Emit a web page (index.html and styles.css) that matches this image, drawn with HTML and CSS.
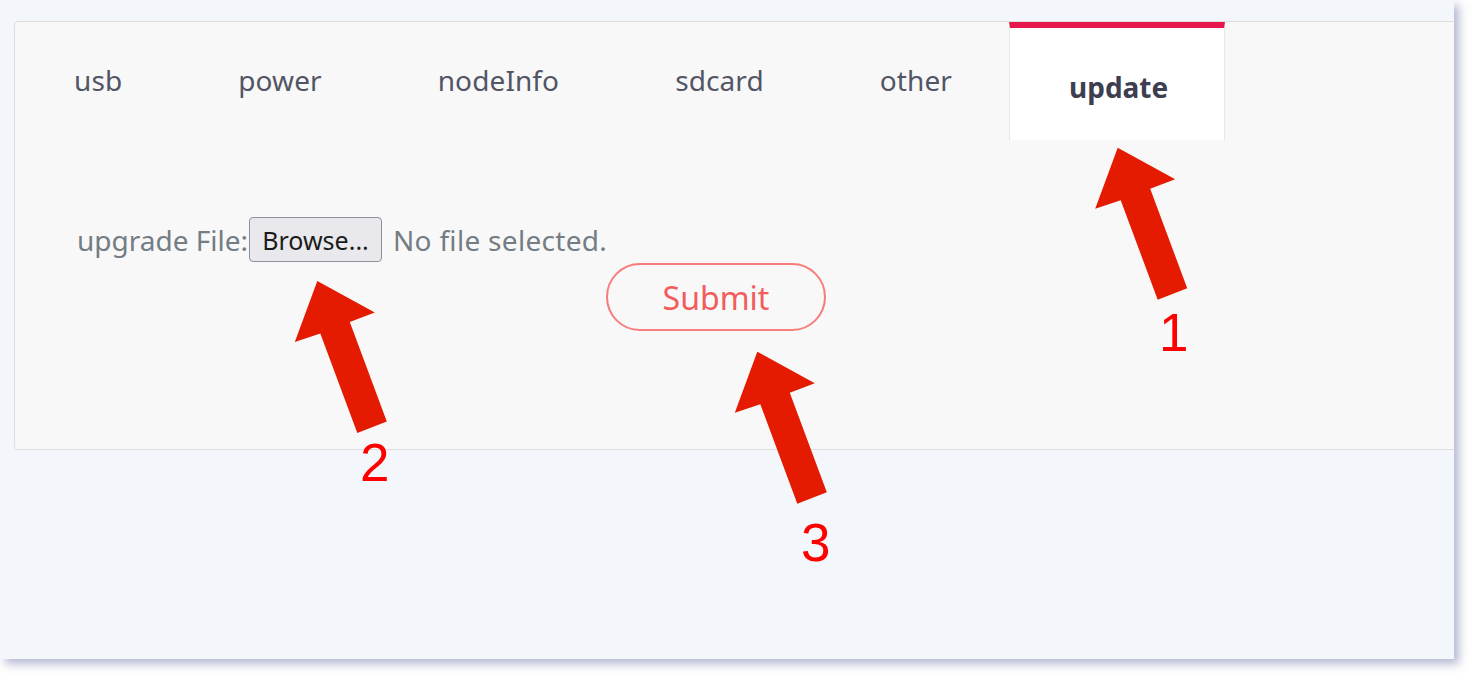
FILE: index.html
```html
<!DOCTYPE html>
<html>
<head>
<meta charset="utf-8">
<link rel="stylesheet" href="styles.css">
</head>
<body>
<div class="frame">
  <div class="card">
    <div class="tabs">
      <div class="tab">usb</div>
      <div class="tab">power</div>
      <div class="tab">nodeInfo</div>
      <div class="tab">sdcard</div>
      <div class="tab">other</div>
      <div class="tab active">update</div>
    </div>
    <div class="content">
      <div class="file-row">
        <span class="label">upgrade File:</span>
        <button class="browse" type="button">Browse...</button>
        <span class="nofile">No file selected.</span>
      </div>
      <button class="submit" type="button">Submit</button>
    </div>
  </div>
</div>
<svg class="annot" width="1480" height="682" viewBox="0 0 1480 682">
  <g fill="#e41b00">
    <polygon points="1117.7,147.7 1175.2,179.2 1150.2,188.7 1187.2,288.2 1157.7,299.7 1120.7,200.2 1095.2,208.7"/>
    <polygon points="317.3,281 374.8,312.5 349.8,322 386.8,421.5 357.3,433 320.3,333.5 294.8,342"/>
    <polygon points="757.3,351.7 814.8,383.2 789.8,392.7 826.8,492.2 797.3,503.7 760.3,404.2 734.8,412.7"/>
  </g>
  <g fill="#ff0000" class="num">
    <text x="1159" y="351">1</text>
    <text x="360" y="481">2</text>
    <text x="801" y="561">3</text>
  </g>
</svg>
</body>
</html>
```

FILE: styles.css
```css
html, body {
  margin: 0;
  padding: 0;
  background: #ffffff;
}
body {
  position: relative;
  width: 1480px;
  height: 682px;
  overflow: hidden;
  font-family: "Noto Sans", "Open Sans", sans-serif;
}
.frame {
  width: 1454px;
  height: 659px;
  background: #f3f6fa;
  box-shadow: 5px 5px 9px rgba(120, 125, 175, 0.55);
  overflow: hidden;
  padding-top: 21px;
  box-sizing: border-box;
}
.card {
  margin-left: 14px;
  width: 1480px;
  background: #f8f8f8;
  border: 1px solid #dedede;
  border-radius: 4px;
  box-sizing: border-box;
}
.tabs {
  display: flex;
  height: 118px;
  padding-left: 1px;
}
.tab {
  padding: 40px 58px 0 58px;
  line-height: 37px;
  font-size: 28px;
  letter-spacing: 0.1px;
  color: #525566;
}
.tab.active {
  background: #ffffff;
  border-top: 6px solid #e6174b;
  border-left: 1px solid #e8e8e8;
  border-right: 1px solid #e8e8e8;
  padding: 41px 56px 0 59px;
  font-weight: 700;
  letter-spacing: 0;
  color: #3d3f50;
  margin-left: -1px;
}
.content {
  display: flex;
  flex-direction: column;
  align-items: flex-start;
  padding: 77px 0 118px 62px;
}
.file-row {
  display: flex;
  align-items: center;
  height: 45px;
  font-size: 28px;
  color: #747c84;
}
.nofile {
  letter-spacing: 0.3px;
}
.label {
  margin-right: 1px;
}
.browse {
  height: 45px;
  width: 133px;
  padding: 0;
  font-family: "Noto Sans", sans-serif;
  font-size: 25px;
  color: #1b1b1b;
  background: #e9e9ed;
  border: 1px solid #8f8f9d;
  border-radius: 4px;
  margin-right: 11px;
}
.submit {
  margin-top: 1px;
  margin-left: 529px;
  width: 220px;
  height: 68px;
  padding: 0;
  font-family: "Noto Sans", sans-serif;
  font-size: 32px;
  color: #f35c5c;
  background: transparent;
  border: 2px solid #f87c7c;
  border-radius: 34px;
}
.annot {
  position: absolute;
  left: 0;
  top: 0;
  pointer-events: none;
}
.num {
  font-family: "Liberation Sans", Arial, sans-serif;
  font-size: 53px;
}
```
